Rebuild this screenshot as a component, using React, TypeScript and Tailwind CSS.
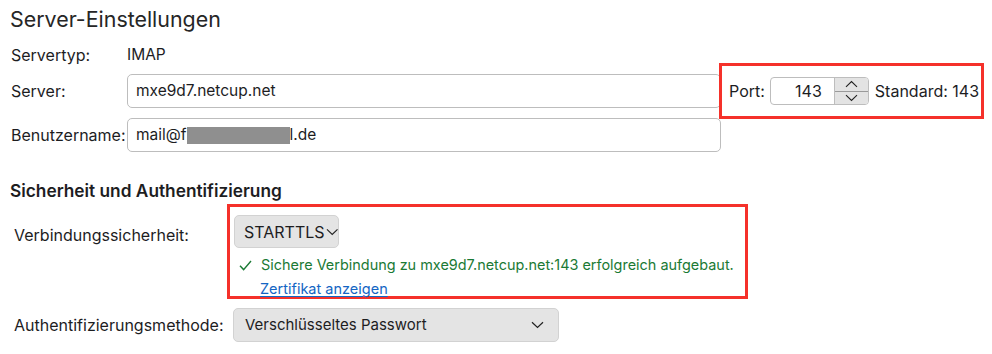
import React from "react";

const font = { fontFamily: "Inter, 'Liberation Sans', sans-serif" };

function Chevron({ className = "" }: { className?: string }) {
  return (
    <svg className={className} width="13" height="8" viewBox="0 0 13 8" fill="none">
      <path d="M1 1.2 L6.5 6.5 L12 1.2" stroke="#222" strokeWidth="1.2" fill="none" />
    </svg>
  );
}

export default function App() {
  return (
    <div
      className="w-[992px] h-[354px] bg-white text-[#1d1d1f] text-[16px] overflow-hidden"
      style={font}
    >
      {/* Title */}
      <div className="h-[38px] pl-[10px] flex items-center text-[21.4px] text-[#262626]">
        Server-Einstellungen
      </div>

      {/* Servertyp */}
      <div className="h-[34px] flex items-center pl-[11px]">
        <div className="w-[116px]">Servertyp:</div>
        <div className="text-[15.5px]">IMAP</div>
      </div>

      {/* Server */}
      <div className="h-[38px] flex items-center pl-[11px]">
        <div className="w-[116px]">Server:</div>
        <div className="w-[594px] h-[34px] border border-[#bdbdbd] rounded-[5px] flex items-center px-[8px] text-[15.5px]">
          mxe9d7.netcup.net
        </div>
        <div className="-my-[9px] -ml-[2px] h-[56px] w-[265px] border-[3px] border-[#f5312a] flex items-center pl-[7px] whitespace-nowrap">
          <span>Port:</span>
          <div className="ml-[5px] w-[99px] h-[28px] border border-[#bdbdbd] rounded-[4px] flex overflow-hidden">
            <div className="flex-1 flex items-center justify-end pr-[12px]">143</div>
            <div className="w-[34px] border-l border-[#bdbdbd] flex flex-col bg-[#e3e3e3]">
              <div className="flex-1 flex items-center justify-center border-b border-[#9a9a9a]">
                <svg width="13" height="8" viewBox="0 0 13 8">
                  <path d="M1 6.8 L6.5 1.5 L12 6.8" stroke="#222" strokeWidth="1.1" fill="none" />
                </svg>
              </div>
              <div className="flex-1 flex items-center justify-center">
                <svg width="13" height="8" viewBox="0 0 13 8">
                  <path d="M1 1.2 L6.5 6.5 L12 1.2" stroke="#222" strokeWidth="1.1" fill="none" />
                </svg>
              </div>
            </div>
          </div>
          <span className="ml-[6px]">Standard: 143</span>
        </div>
      </div>

      {/* Benutzername */}
      <div className="h-[50px] flex items-center pl-[11px]">
        <div className="w-[116px]">Benutzername:</div>
        <div className="w-[594px] h-[34px] border border-[#bdbdbd] rounded-[5px] flex items-center px-[8px] text-[15.5px]">
          <span>mail@f</span>
          <span className="inline-block w-[103px] h-[17px] bg-[#8f8f8f]"></span>
          <span>l.de</span>
        </div>
      </div>

      {/* Section heading */}
      <div className="mt-[17px] h-[28px] flex items-center pl-[10px] font-semibold text-[17.3px] text-[#1d1d1f]">
        Sicherheit und Authentifizierung
      </div>

      {/* Verbindungssicherheit */}
      <div className="flex pl-[14px] -mt-[1px]">
        <div className="w-[213px] pt-[19px]">Verbindungssicherheit:</div>
        <div className="w-[521px] h-[95px] border-[3px] border-[#f5312a] pl-[4px] pt-[8px]">
          <div className="w-[105px] h-[33px] bg-[#e4e4e4] border border-[#d2d2d2] rounded-[5px] flex items-center pl-[9px]">
            <span>STARTTLS</span>
            <Chevron className="ml-[1px] mt-[1px]" />
          </div>
          <div className="mt-[6px] h-[22px] flex items-center pl-[5px] text-[#1b7a35] whitespace-nowrap">
            <svg width="13" height="11" viewBox="0 0 13 11" className="mr-[9px] shrink-0">
              <path d="M1 5.8 L4.6 9.6 L12 1" stroke="#1b7a35" strokeWidth="1.4" fill="none" />
            </svg>
            <span className="text-[14.45px]">Sichere Verbindung zu mxe9d7.netcup.net:143 erfolgreich aufgebaut.</span>
          </div>
          <div className="mt-[2px] h-[22px] flex items-center pl-[26px]">
            <span className="text-[#1466c4] underline underline-offset-2 text-[14.5px]">Zertifikat anzeigen</span>
          </div>
        </div>
      </div>

      {/* Authentifizierungsmethode */}
      <div className="mt-[9px] flex items-center pl-[14px]">
        <div className="w-[219px]">Authentifizierungsmethode:</div>
        <div className="w-[326px] h-[34px] bg-[#e4e4e4] border border-[#d2d2d2] rounded-[5px] flex items-center justify-between pl-[11px] pr-[14px]">
          <span className="text-[15px]">Verschlüsseltes Passwort</span>
          <Chevron />
        </div>
      </div>
    </div>
  );
}
